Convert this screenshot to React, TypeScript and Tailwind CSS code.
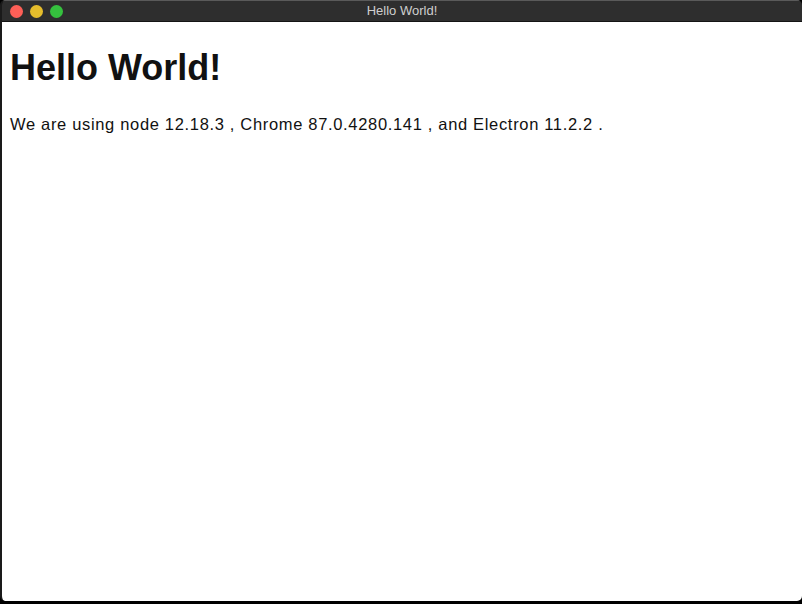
export default function App() {
  return (
    <div className="w-[802px] h-[604px] bg-black overflow-hidden font-['Liberation_Sans',Arial,sans-serif]">
      <div className="w-[802px] h-[601px] rounded-[5px] overflow-hidden flex flex-col border-l-2 border-[#1a1a1a]">
        <div className="relative h-[22px] shrink-0 bg-[#2e2e2e] border-t border-[#5a5a5a] border-b border-b-[#141414] flex items-center">
          <div className="flex gap-[7px] pl-[8px]">
            <span className="w-[13px] h-[13px] rounded-full bg-[#fd5f57]" />
            <span className="w-[13px] h-[13px] rounded-full bg-[#e5bd2c]" />
            <span className="w-[13px] h-[13px] rounded-full bg-[#35c13e]" />
          </div>
          <div className="absolute inset-0 flex items-center justify-center text-[13px] text-[#cfcfcf]">Hello World!</div>
        </div>
        <div className="flex-1 bg-white text-[#111] px-[8px] pt-[26px]">
          <h1 className="text-[36px] font-bold leading-[40px]">Hello World!</h1>
          <p className="mt-[26px] text-[16.5px] leading-[20px] tracking-[0.67px]">
            We are using node 12.18.3 , Chrome 87.0.4280.141 , and Electron 11.2.2 .
          </p>
        </div>
      </div>
    </div>
  );
}
